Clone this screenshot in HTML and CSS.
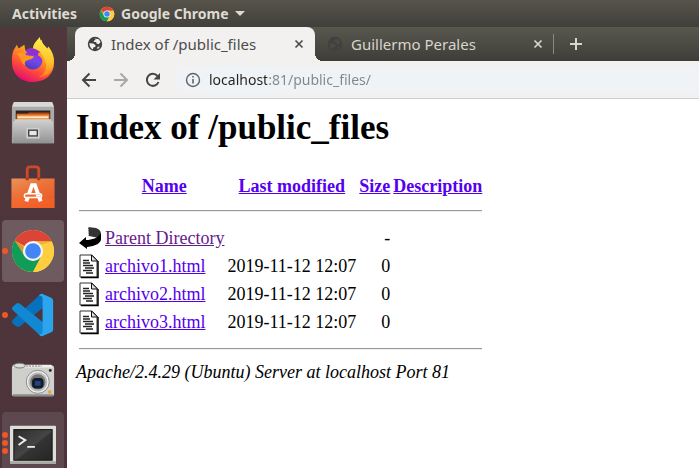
FILE: index.html
```html
<!DOCTYPE html>
<html lang="en">
<head>
<meta charset="utf-8">
<meta name="viewport" content="width=device-width, initial-scale=1">
<title>Index of /public_files</title>
<link rel="stylesheet" href="styles.css">
</head>
<body>
<svg class="defs" aria-hidden="true">
  <defs>
    <symbol id="chrome" viewBox="0 0 48 48">
      <circle cx="24" cy="24" r="22" fill="#ffcd40"/>
      <path d="M24 24 4.950 13A22 22 0 0 1 43.050 13L43.500 14H24z" fill="#db4437"/>
      <path d="M4.950 13A22 22 0 0 0 24 46L33 29 24 34 15 29z" fill="#0f9d58"/>
      <path d="M24 14h19.500A22 22 0 0 1 24 46l9-17z" fill="#ffcd40"/>
      <path d="M24 14h19.500L30 18z" fill="#b98d18" opacity=".35"/>
      <path d="M5 13l10 16 2-8z" fill="#7c2018" opacity=".3"/>
      <circle cx="24" cy="24" r="10.500" fill="#f4f4f4"/>
      <circle cx="24" cy="24" r="8.200" fill="#4285f4"/>
    </symbol>
    <symbol id="globe" viewBox="0 0 16 16">
      <circle cx="8" cy="8" r="7.200" fill="currentColor"/>
      <path class="land" d="M7.500 2.400 12 3.200 13.500 6l-1.800 2.200-2.200-.7-.3-1.500H6.800l.2-1.400 1.800-.6zM2.300 7.200l4 .2 2.300 1.900-.4 1.800-2 .4-.2 2C3.700 12.600 2.300 10 2.300 7.200zM9.800 12.800l1-2.100 2 .1-1.300 1.700z"/>
    </symbol>
    <symbol id="close" viewBox="0 0 10 10">
      <path d="M1.500 1.500l7 7m0-7l-7 7" fill="none" stroke="currentColor" stroke-width="1.700"/>
    </symbol>
    <symbol id="text-file" viewBox="0 0 20 24">
      <path d="M1 1h12l5 5v17H1z" fill="#fff" stroke="#333"/>
      <path d="M2 23.500h17V7" fill="none" stroke="#000" stroke-width="1.500"/>
      <path d="M12.500 1v6h6z" fill="#ddd" stroke="#111"/>
      <path d="M4 6.500h6M4 9h7M4 11.500h10M6 14h9M4 16.500h9M7 19h7" stroke="#222" stroke-width="1.400"/>
    </symbol>
    <symbol id="back-icon" viewBox="0 0 22 22">
      <path d="M9 0l8 1c3 1 5 3 5 6l-2 4-10-2z" fill="#333"/>
      <path d="M9.500 0v9" stroke="#aaa" stroke-dasharray="1 1"/>
      <path d="M22 6v6c0 4-5 7-14 8v2L0 16l7-6v3c6 0 12-2 15-7z" fill="#000"/>
    </symbol>
    <linearGradient id="ff-body" x1=".8" y1="0" x2=".3" y2="1">
      <stop offset="0" stop-color="#ffe83a"/><stop offset=".35" stop-color="#ffa51d"/>
      <stop offset=".7" stop-color="#ff4b3a"/><stop offset="1" stop-color="#e40878"/>
    </linearGradient>
    <linearGradient id="ff-tail" x1=".6" y1="0" x2=".5" y2="1">
      <stop offset="0" stop-color="#fff44f"/><stop offset=".6" stop-color="#ffc02a"/><stop offset="1" stop-color="#ff7a20"/>
    </linearGradient>
    <linearGradient id="ff-globe" x1=".7" y1="0" x2=".3" y2="1">
      <stop offset="0" stop-color="#a02ee6"/><stop offset=".55" stop-color="#7048e8"/><stop offset="1" stop-color="#4a3ab8"/>
    </linearGradient>
    <linearGradient id="steel" x2="0" y2="1">
      <stop offset="0" stop-color="#d2d2d2"/><stop offset="1" stop-color="#929292"/>
    </linearGradient>
    <linearGradient id="bag" x1="0" y1="0" x2=".6" y2="1">
      <stop offset="0" stop-color="#e9935a"/><stop offset=".5" stop-color="#ec7038"/><stop offset="1" stop-color="#ea5a25"/>
    </linearGradient>
    <linearGradient id="screen" x2="1" y2="1">
      <stop offset="0" stop-color="#2b2b2b"/><stop offset=".5" stop-color="#454545"/><stop offset=".55" stop-color="#333"/><stop offset="1" stop-color="#262626"/>
    </linearGradient>
  </defs>
</svg>

<header class="topbar">
  <button type="button" class="topbar-item">Activities</button>
  <button type="button" class="topbar-item">
    <svg class="topbar-icon" aria-hidden="true"><use href="#chrome"/></svg>
    Google Chrome
    <svg class="caret" viewBox="0 0 10 6" aria-hidden="true"><path d="M0 0h10L5 5z" fill="currentColor"/></svg>
  </button>
</header>

<div class="desktop">
  <nav class="dock" aria-label="Applications">
    <button type="button" class="app" aria-label="Firefox">
      <svg viewBox="0 0 48 48">
        <path d="M3 17c1-4 3-5 4-8l2 4 6-4 1 6c2-1 5-2 8-2l9-9c1 6 5 9 7 13l2-2c3 5 4 9 4 13 0 12-9 20-22 20S2 39 2 27c0-4 0-7 1-10z" fill="url(#ff-body)"/>
        <path d="M24 12c1-5 5-8 7-11 1 6 5 8 8 12l1-2c5 6 7 13 5 20-2 8-9 12-15 12 7-4 9-10 7-16-2-7-10-8-13-15z" fill="url(#ff-tail)"/>
        <circle cx="24" cy="25" r="10" fill="url(#ff-globe)"/>
        <path d="M16 15c5-4 11-2 16 2l-3 1c4 2 5 5 4 9-2-6-8-9-13-7z" fill="#8f30cf"/>
        <path d="M7 18c4-1 7-1 10 2l8 1c-1 3-4 3-6 4-4 1-4 3-3 6-4-2-4-7-9-13z" fill="#ff9820"/>
        <path d="M30 17c5 3 8 9 5 15 0-5-1-9-6-12z" fill="#ff9a28"/>
      </svg>
    </button>
    <button type="button" class="app" aria-label="Files">
      <svg viewBox="0 0 48 48">
        <path d="M4 3h40l2 5v37H2V8z" fill="#aaa"/>
        <path d="M4 2h40l2 5H2z" fill="#d8d8d8"/>
        <path d="M6 11h36v10H6z" fill="#292422"/>
        <path d="M7 14h11l2-1h21v8H7z" fill="#b84b16"/>
        <path d="M7 15h34v6H7z" fill="#f28b35"/>
        <path d="M8 17h32v2H8z" fill="#ffe4c7"/>
        <path d="M5 20h38v2l2 1v22H3V23l2-1z" fill="url(#steel)"/>
        <path d="M3 45h42v1H3z" fill="#666"/>
        <rect x="17" y="29" width="14" height="11" rx="1" fill="#d5d5d5" stroke="#bcbcbc"/>
        <rect x="19.500" y="31.500" width="9" height="6" fill="#e8e8e8" stroke="#454545" stroke-width="1.500"/>
      </svg>
    </button>
    <button type="button" class="app" aria-label="Ubuntu Software">
      <svg viewBox="0 0 48 48">
        <path d="M1.500 15h45v31h-45z" fill="url(#bag)"/>
        <path d="M1.500 36h45v10h-45z" fill="#ff6a2a" opacity=".35"/>
        <path d="M18 16V6q0-3 3-3h6q3 0 3 3v10" fill="none" stroke="#ce4925" stroke-width="3"/>
        <path d="M16.500 14h3v3h-3zm12 0h3v3h-3z" fill="#a83a1c"/>
        <path d="M17 39l6-17h3l6 17" fill="none" stroke="#fff" stroke-width="4"/>
        <rect x="15" y="31" width="18" height="4" rx="2" fill="#f26b2b" stroke="#fff" stroke-width="1.500"/>
        <path d="M27 32h5v2h-5z" fill="#fff"/>
      </svg>
    </button>
    <button type="button" class="app active" aria-label="Google Chrome">
      <span class="dots"><i></i></span>
      <svg viewBox="0 0 48 48"><use href="#chrome"/></svg>
    </button>
    <button type="button" class="app" aria-label="Visual Studio Code">
      <span class="dots"><i></i></span>
      <svg viewBox="0 0 48 48">
        <path d="M3 33l4 3q1 1 3 0L35 16V3q-3-1-5 1L3 29q-2 2 0 4z" fill="#0871bd"/>
        <path d="M3 15l4-3q1-1 3 0l25 20v13q-3 1-5-1L3 19q-2-2 0-4z" fill="#1288d3"/>
        <path d="M34 2l9 4q2 1 2 3v30q0 2-2 3l-9 4q-2 1-4-2 4 1 4-3V7q0-4-4-3 2-3 4-2z" fill="#2ba6ee"/>
      </svg>
    </button>
    <button type="button" class="app" aria-label="Shotwell">
      <svg viewBox="0 0 48 48">
        <path d="M3 10h41q2 0 2 3v27q0 2-2 2H4q-2 0-2-2V12z" fill="#cfcfcc"/>
        <path d="M3 9h40l2 3H3z" fill="#efefed"/>
        <path d="M3 40h42v2H3z" fill="#8b8b88"/>
        <ellipse cx="10" cy="10" rx="6" ry="2.500" fill="#ddd" stroke="#777"/>
        <path d="M17 10.500h16" stroke="#777" stroke-dasharray="2 1"/>
        <circle cx="29" cy="27" r="12" fill="#efefef" stroke="#888"/>
        <circle cx="29" cy="27" r="9" fill="#777" stroke="#bbb" stroke-width="2"/>
        <rect x="23" y="23" width="12" height="11" rx="4" fill="#141b28"/>
        <path d="M26 26h6v5h-6z" fill="#1e4585"/>
        <circle cx="42" cy="15" r="1.500" fill="#222"/>
        <path d="M40 36h3v3h-3z" fill="#e8a020"/>
      </svg>
    </button>
    <button type="button" class="app focused" aria-label="Terminal">
      <span class="dots"><i></i><i></i><i></i></span>
      <svg viewBox="0 0 48 48">
        <rect x="0" y="6" width="48" height="40" rx="1" fill="#deded9"/>
        <path d="M0 43h48v3H0z" fill="#a8a8a4"/>
        <rect x="4" y="10" width="40" height="32" fill="url(#screen)" stroke="#111"/>
        <path d="M9 17l7 4-7 5M18 28h8" fill="none" stroke="#eee" stroke-width="2"/>
      </svg>
    </button>
  </nav>

  <main class="window">
    <div class="tabs">
      <div class="tab current">
        <svg class="favicon" aria-hidden="true"><use href="#globe"/></svg>
        <span class="tab-title">Index of /public_files</span>
        <button type="button" class="icon-button" aria-label="Close tab"><svg class="close"><use href="#close"/></svg></button>
      </div>
      <div class="tab">
        <svg class="favicon" aria-hidden="true"><use href="#globe"/></svg>
        <span class="tab-title">Guillermo Perales</span>
        <button type="button" class="icon-button" aria-label="Close tab"><svg class="close"><use href="#close"/></svg></button>
      </div>
      <button type="button" class="icon-button new-tab" aria-label="New tab">
        <svg viewBox="0 0 12 12"><path d="M6 0v12M0 6h12" stroke="currentColor" stroke-width="2"/></svg>
      </button>
    </div>

    <div class="toolbar">
      <button type="button" class="icon-button" aria-label="Back"><svg viewBox="0 0 16 16"><path d="M15 8H2m6.500-6.500L2 8l6.500 6.500" fill="none" stroke="currentColor" stroke-width="2"/></svg></button>
      <button type="button" class="icon-button" aria-label="Forward" disabled><svg viewBox="0 0 16 16"><path d="M1 8h13M7.500 1.500L14 8l-6.500 6.500" fill="none" stroke="currentColor" stroke-width="2"/></svg></button>
      <button type="button" class="icon-button" aria-label="Reload"><svg viewBox="0 0 16 16"><path d="M13.500 10A6 6 0 1 1 12.500 4" fill="none" stroke="currentColor" stroke-width="2"/><path d="M15 1v6.500H8.500z" fill="currentColor"/></svg></button>
      <label class="address">
        <svg viewBox="0 0 16 16" aria-hidden="true"><circle cx="8" cy="8" r="6.500" fill="none" stroke="currentColor" stroke-width="1.400"/><path d="M8 7v4.500M8 4v1.600" stroke="currentColor" stroke-width="1.600"/></svg>
        <input type="text" value="localhost:81/public_files/" aria-label="Address">
      </label>
    </div>

    <article class="page">
      <h1>Index of /public_files</h1>
      <table>
        <thead>
          <tr>
            <th></th>
            <th><a href="#name">Name</a></th>
            <th><a href="#modified">Last modified</a></th>
            <th><a href="#size">Size</a></th>
            <th><a href="#description">Description</a></th>
          </tr>
        </thead>
        <tbody>
          <tr class="rule"><td colspan="5"><hr></td></tr>
          <tr>
            <td><svg class="file-icon" aria-hidden="true"><use href="#back-icon"/></svg></td>
            <td><a class="visited" href="#parent">Parent Directory</a></td>
            <td></td>
            <td class="size">-</td>
            <td></td>
          </tr>
          <tr>
            <td><svg class="file-icon doc" aria-hidden="true"><use href="#text-file"/></svg></td>
            <td><a href="#archivo1">archivo1.html</a></td>
            <td>2019-11-12 12:07</td>
            <td class="size">0</td>
            <td></td>
          </tr>
          <tr>
            <td><svg class="file-icon doc" aria-hidden="true"><use href="#text-file"/></svg></td>
            <td><a href="#archivo2">archivo2.html</a></td>
            <td>2019-11-12 12:07</td>
            <td class="size">0</td>
            <td></td>
          </tr>
          <tr>
            <td><svg class="file-icon doc" aria-hidden="true"><use href="#text-file"/></svg></td>
            <td><a href="#archivo3">archivo3.html</a></td>
            <td>2019-11-12 12:07</td>
            <td class="size">0</td>
            <td></td>
          </tr>
          <tr class="rule"><td colspan="5"><hr></td></tr>
        </tbody>
      </table>
      <address>Apache/2.4.29 (Ubuntu) Server at localhost Port 81</address>
    </article>
  </main>
</div>
</body>
</html>
```
FILE: styles.css
```css
* {
  box-sizing: border-box;
}

body {
  display: flex;
  flex-direction: column;
  height: 100vh;
  margin: 0;
  overflow: hidden;
  background: #4f363a;
  font-family: "Noto Sans", "Open Sans", sans-serif;
}

button {
  padding: 0;
  border: 0;
  background: none;
  color: inherit;
  font: inherit;
}

svg {
  display: block;
  flex: none;
}

.defs {
  position: absolute;
  width: 0;
  height: 0;
}

/* Top bar */
.topbar {
  display: flex;
  flex: none;
  gap: 22px;
  height: 27px;
  padding: 0 12px;
  background: linear-gradient(#57544b, #403f3a);
  color: #dfdbd2;
  font-size: 14px;
  font-weight: 700;
}

.topbar-item {
  display: flex;
  align-items: center;
  gap: 6px;
  white-space: nowrap;
}

.topbar-icon {
  width: 16px;
  height: 16px;
}

.caret {
  width: 10px;
  height: 6px;
}

.desktop {
  display: flex;
  flex: 1;
  min-height: 0;
}

/* Dock */
.dock {
  display: flex;
  flex: none;
  flex-direction: column;
  gap: 2px;
  width: 67px;
  padding: 1px 2px;
  overflow: hidden;
  background: linear-gradient(#50373b, #4d343c);
}

.app {
  position: relative;
  display: flex;
  flex: none;
  align-items: center;
  justify-content: center;
  width: 62px;
  height: 62px;
  border-radius: 4px;
}

.app > svg {
  width: 46px;
  height: 46px;
}

.app.active {
  background: #6e5b60;
}

.app.focused {
  background: #5e484f;
}

.dots {
  position: absolute;
  left: 0;
  display: grid;
  gap: 2px;
}

.dots i {
  width: 6px;
  height: 6px;
  border-radius: 50%;
  background: #ef5724;
}

/* Browser window */
.window {
  display: flex;
  flex: 1;
  flex-direction: column;
  min-width: 0;
  background: #fff;
}

.tabs {
  display: flex;
  flex: none;
  height: 34px;
  padding-left: 8px;
  background: linear-gradient(#59584f, #3e3d38);
  color: #d8d5cc;
  font-size: 15px;
}

.tab {
  --land: #4b4a44;
  position: relative;
  display: flex;
  align-items: center;
  flex: 0 1 239px;
  gap: 8px;
  min-width: 0;
  padding: 0 8px 0 12px;
}

.tab:not(.current)::after {
  content: "";
  position: absolute;
  top: 7px;
  right: 0;
  width: 1px;
  height: 20px;
  background: #8a887f;
}

.tab.current {
  --land: #f2f1f0;
  flex-basis: 240px;
  border-radius: 8px 8px 0 0;
  background: #f2f1f0;
  color: #4c4c4c;
}

.tab.current::before,
.tab.current::after {
  content: "";
  position: absolute;
  bottom: 0;
  width: 8px;
  height: 8px;
}

.tab.current::before {
  right: 100%;
  background: radial-gradient(circle at 0 0, transparent 8px, #f2f1f0 8px);
}

.tab.current::after {
  left: 100%;
  background: radial-gradient(circle at 100% 0, transparent 8px, #f2f1f0 8px);
}

.favicon {
  width: 16px;
  height: 16px;
  color: #404040;
}

.land {
  fill: var(--land);
}

.tab-title {
  flex: 1;
  overflow: hidden;
  white-space: nowrap;
}

.icon-button {
  display: flex;
  align-items: center;
  justify-content: center;
  width: 16px;
  height: 16px;
}

.close {
  width: 10px;
  height: 10px;
}

.new-tab {
  align-self: center;
  margin-left: 14px;
}

.new-tab svg {
  width: 12px;
  height: 12px;
}

.toolbar {
  display: flex;
  flex: none;
  align-items: center;
  gap: 16px;
  height: 38px;
  padding-left: 14px;
  border-bottom: 1px solid #cfcecd;
  background: #f2f1f0;
  color: #464646;
}

.toolbar .icon-button svg,
.address svg {
  width: 16px;
  height: 16px;
}

.toolbar .icon-button:disabled {
  color: #a9a8a7;
}

.address {
  display: flex;
  flex: 1;
  align-items: center;
  gap: 8px;
  height: 28px;
  margin-left: -2px;
  padding-left: 10px;
  border-radius: 14px 0 0 14px;
  background: #f0f3f5;
  color: #5f6368;
}

/* The host part of the address is darker than the rest. */
.address input {
  flex: 1;
  min-width: 0;
  padding: 0;
  border: 0;
  outline: 0;
  background: linear-gradient(90deg, #222 58px, #80868b 58px);
  background-clip: text;
  -webkit-background-clip: text;
  color: transparent;
  font: 14px "Noto Sans", "Open Sans", sans-serif;
}

/* Directory listing */
.page {
  flex: 1;
  padding: 9px;
  overflow: hidden;
  color: #000;
  font: 18px/20px "Liberation Serif", "Times New Roman", serif;
}

h1 {
  margin: 0 0 26px;
  font-size: 35px;
  line-height: 40px;
}

table {
  border-spacing: 3px 0;
}

th,
td {
  height: 28px;
  padding: 0;
  white-space: nowrap;
}

th {
  height: 24px;
}

td:nth-child(2) {
  padding-left: 1px;
}

.rule td {
  height: 26px;
}

hr {
  margin: 0;
  border: 0;
  border-top: 1px solid #9a9a9a;
  border-bottom: 1px solid #eee;
}

.size {
  text-align: right;
}

.file-icon {
  width: 22px;
  height: 24px;
}

.file-icon.doc {
  width: 20px;
  height: 26px;
}

a {
  color: #5500ee;
}

a.visited {
  color: #651a8b;
}
```
